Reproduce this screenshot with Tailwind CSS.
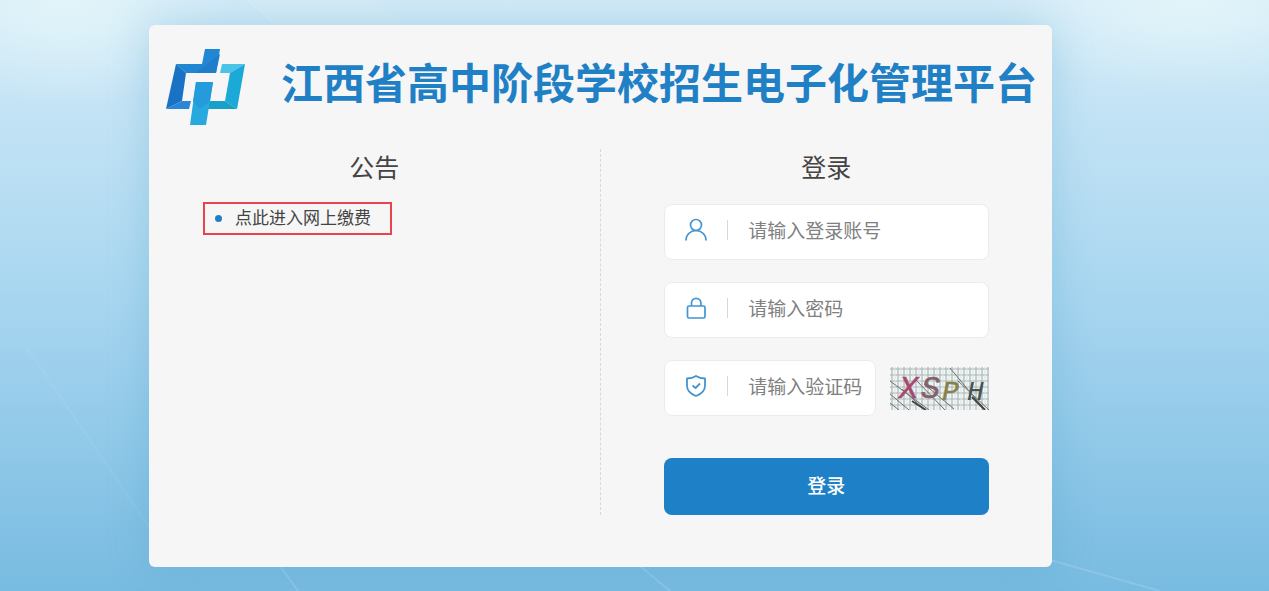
<!DOCTYPE html>
<html lang="zh-CN">
<head>
  <meta charset="UTF-8">
  <meta name="viewport" content="width=device-width, initial-scale=1.0">
  <title>江西省高中阶段学校招生电子化管理平台</title>
  <script src="https://cdn.jsdelivr.net/npm/@tailwindcss/browser@4"></script>
</head>
<body class="relative min-h-screen overflow-x-hidden bg-linear-to-b from-[#d4ebf8] via-[#a8d6f0] to-[#78bbe1] font-['Liberation_Sans','Noto_Sans_CJK_SC',sans-serif] text-[#444]">
  <!-- Background shapes -->
  <svg class="absolute inset-0 h-full w-full" viewBox="0 0 1269 591" preserveAspectRatio="none" fill="none" aria-hidden="true">
    <defs>
      <radialGradient id="glow">
        <stop offset="0" stop-color="#e6f7fa" stop-opacity="0.8" />
        <stop offset="1" stop-color="#e6f7fa" stop-opacity="0" />
      </radialGradient>
    </defs>
    <ellipse cx="65" cy="5" rx="170" ry="100" fill="url(#glow)" />
    <ellipse cx="1190" cy="5" rx="200" ry="90" fill="url(#glow)" />
    <path d="M250 0 282 30H420L370 0Z" fill="#fff" fill-opacity="0.08" />
    <path d="M248 0 282 30M280 566 298 591M640 566 670 591M1050 560 1160 591" stroke="#fff" stroke-opacity="0.14" stroke-width="2" />
    <path d="M25 345 150 528" stroke="#fff" stroke-opacity="0.06" stroke-width="2" />
  </svg>

  <!-- Login card -->
  <main class="relative mt-[25px] ml-[149px] mr-8 max-w-[903px] rounded-md bg-[#f6f6f6] pb-[52px] shadow-[0_0_40px_rgba(60,150,190,0.28)]">
    <header class="flex items-start pt-6 pl-4">
      <svg class="h-[78px] w-20 shrink-0" viewBox="0 0 80 78" role="img" aria-label="平台标志">
        <path d="M40 0H55L51 24H21L11 15H37Z" fill="#2187d2" />
        <path d="M36 20 55 5 51 24H30Z" fill="#1f7ecb" />
        <path d="M11 15 21 24 17 52 1 60Z" fill="#1a72c4" />
        <path d="M17 52H26L24 60H1Z" fill="#2a86d6" />
        <path d="M57 15H80L65 24H55Z" fill="#4bc3e6" />
        <path d="M80 15 72 60 60 52 65 24Z" fill="#1ba9d8" />
        <path d="M43 52H60L72 60H36Z" fill="#17a0c8" />
        <path d="M31 33H48L41 76H25Z" fill="#27a9e0" />
        <path d="M31 33H48L45 52L35 60L28 52Z" fill="#249bdb" />
      </svg>
      <h1 class="ml-9 text-[42px] leading-[72px] font-bold whitespace-nowrap text-[#1f80c6]">江西省高中阶段学校招生电子化管理平台</h1>
    </header>

    <div class="mt-[22px] grid grid-cols-2">
      <!-- Notices -->
      <section class="border-r border-dashed border-[#d4d9dc] px-[54px]">
        <h2 class="text-center text-[25px] leading-[38px]">公告</h2>
        <ul class="mt-[15px]">
          <li class="inline-flex h-[33px] items-center border-2 border-[#e8434e] pr-[19px] pl-[10px]">
            <span class="h-[7px] w-[7px] rounded-full bg-[#1f80c6]"></span>
            <a href="#" class="ml-[13px] text-[17px] leading-6">点此进入网上缴费</a>
          </li>
        </ul>
      </section>

      <!-- Login form -->
      <section class="px-[63px]">
        <h2 class="text-center text-[25px] leading-[38px]">登录</h2>
        <form class="mt-[17px]">
          <div class="flex h-14 items-center rounded-lg border border-[#e9ecef] bg-white pl-5">
            <label for="account" class="flex items-center pb-1 text-[#4494cf]">
              <svg class="h-6 w-6" viewBox="0 0 24 24" fill="none" stroke="currentColor" stroke-width="1.7" aria-label="账号">
                <circle cx="11" cy="7" r="5.5" />
                <path d="M1 22.500C1 16.500 5.500 12.500 11 12.500S21 16.500 21 22.500" />
              </svg>
            </label>
            <span class="mb-1 ml-[18px] h-5 w-px bg-[#d5d9dc]"></span>
            <input id="account" type="text" placeholder="请输入登录账号" class="ml-[21px] w-full min-w-0 text-[19px] outline-none placeholder:text-[#808080]">
          </div>

          <div class="mt-[22px] flex h-14 items-center rounded-lg border border-[#e9ecef] bg-white pl-5">
            <label for="password" class="flex items-center pb-1 text-[#4494cf]">
              <svg class="h-6 w-6" viewBox="0 0 24 24" fill="none" stroke="currentColor" stroke-width="1.7" aria-label="密码">
                <rect x="2.500" y="10" width="17.500" height="12" rx="1.500" />
                <path d="M6.500 10V7a4.700 4.700 0 0 1 9.400 0V10" />
              </svg>
            </label>
            <span class="mb-1 ml-[18px] h-5 w-px bg-[#d5d9dc]"></span>
            <input id="password" type="password" placeholder="请输入密码" class="ml-[21px] w-full min-w-0 text-[19px] outline-none placeholder:text-[#808080]">
          </div>

          <div class="mt-[22px] flex items-center gap-[14px]">
            <div class="flex h-14 min-w-0 flex-1 items-center rounded-lg border border-[#e9ecef] bg-white pl-5">
              <label for="captcha" class="flex items-center pb-1 text-[#4494cf]">
                <svg class="h-6 w-6" viewBox="0 0 24 24" fill="none" stroke="currentColor" stroke-width="1.8" stroke-linejoin="round" aria-label="验证码">
                  <path d="M11 2C8 4 5 4.500 2 4.500V11.500C2 17 5.500 20 11 22C16.500 20 20 17 20 11.500V4.500C17 4.500 14 4 11 2Z" />
                  <path d="M7.500 11.500 10.500 14 15 9.500" />
                </svg>
              </label>
              <span class="mb-1 ml-[18px] h-5 w-px bg-[#d5d9dc]"></span>
              <input id="captcha" type="text" placeholder="请输入验证码" class="ml-[21px] w-full min-w-0 text-[19px] outline-none placeholder:text-[#808080]">
            </div>
            <button type="button" aria-label="换一张" class="shrink-0">
              <svg class="h-[43px] w-[99px]" viewBox="0 0 99 43">
                <defs>
                  <pattern id="mesh" width="6" height="6" patternUnits="userSpaceOnUse">
                    <path d="M2 0V6M0 2H6" stroke="#b9c3c2" stroke-width="1.500" />
                    <path d="M5 0V6" stroke="#dbe4e4" stroke-width="1" />
                  </pattern>
                </defs>
                <rect width="99" height="43" fill="#f3f6f6" />
                <rect width="99" height="43" fill="url(#mesh)" />
                <path d="M0 14 39 43M12 22 35 43M25 12 55 43M34 17 64 42M60 1 95 43M68 14 99 43M0 27 19 43M0 36 9 43" fill="none" stroke="#6b7170" stroke-width="1" />
                <path d="M22 34 36 43M82 30 95 43" stroke="#444" stroke-width="2" />
                <g font-family="Liberation Mono" font-style="italic" font-size="32">
                  <text x="9" y="31" fill="#a8486f" stroke="#a8486f" stroke-width="0.500">X</text>
                  <text x="31" y="31" fill="#84606b" stroke="#84606b" stroke-width="0.500">S</text>
                  <text x="52" y="33" font-size="28" fill="#85814a" stroke="#85814a" stroke-width="0.500">P</text>
                  <text x="77" y="33" font-size="28" fill="#45544f">H</text>
                </g>
              </svg>
            </button>
          </div>

          <button type="submit" class="mt-[42px] h-[57px] w-full rounded-lg bg-[#1e80c7] pt-px text-[19px] font-medium text-white hover:bg-[#1a73b4]">登录</button>
        </form>
      </section>
    </div>
  </main>
</body>
</html>
